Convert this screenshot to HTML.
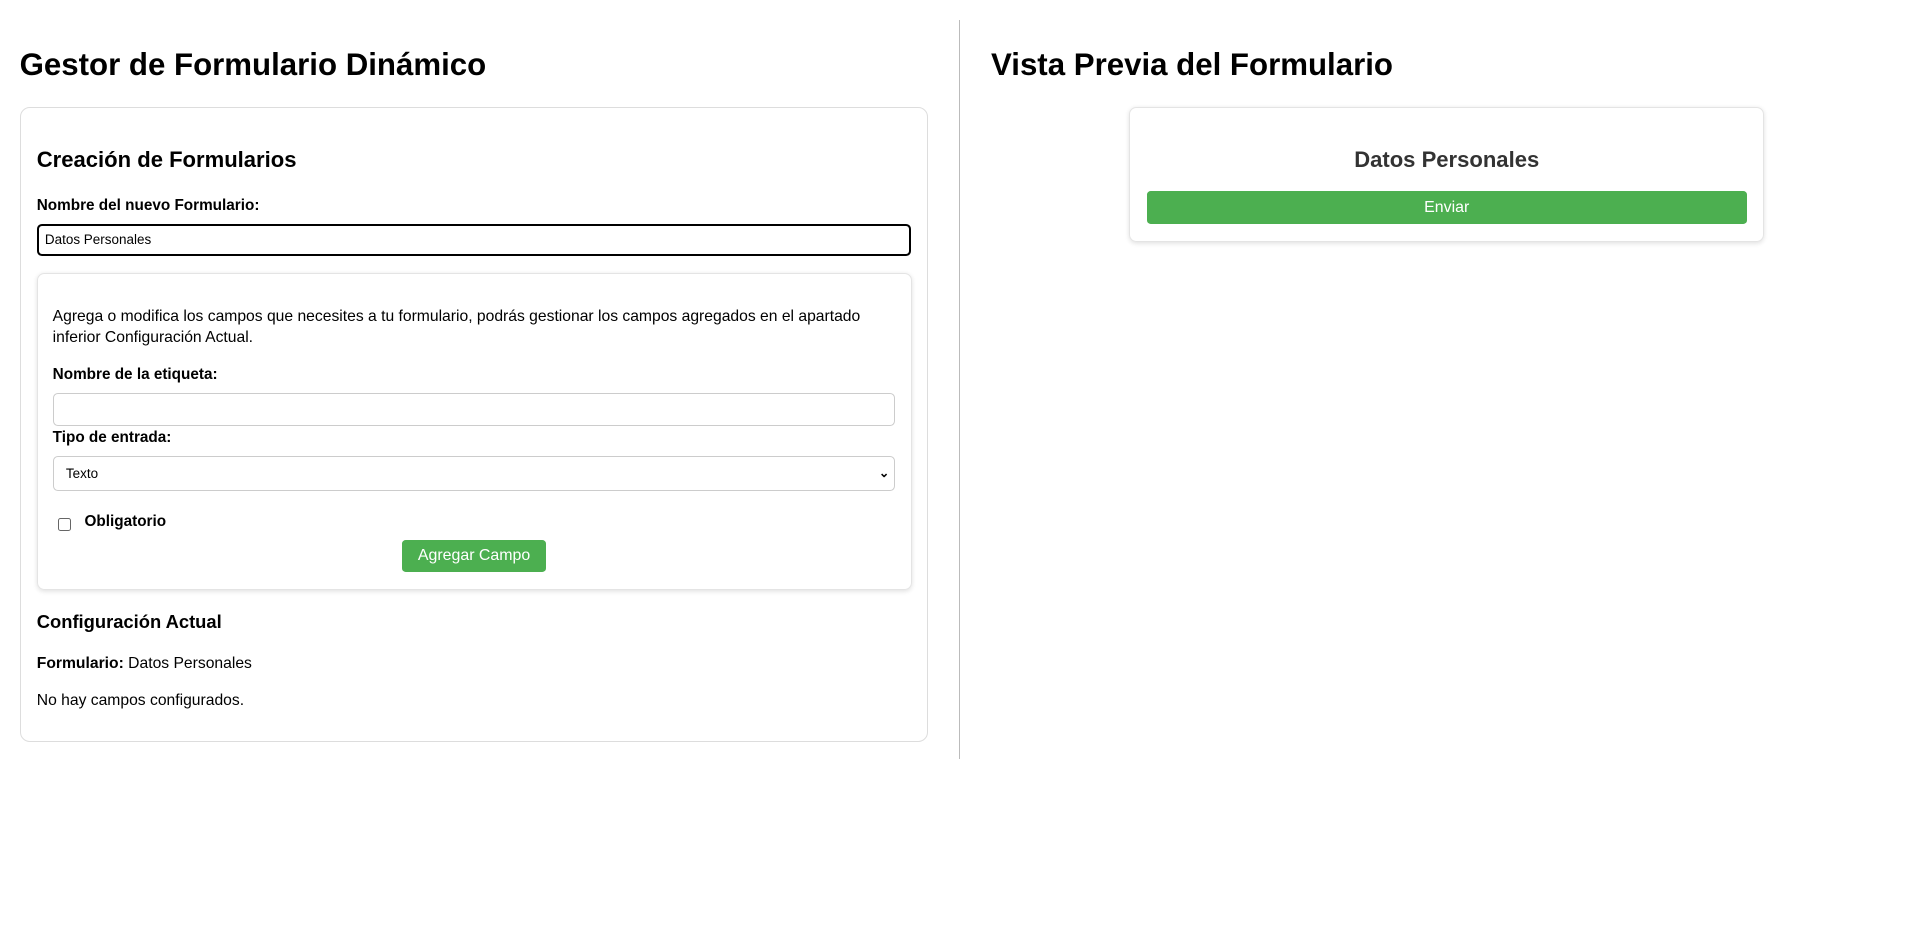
<!DOCTYPE html>
<html><head><meta charset="utf-8"><style>
html,body{margin:0;padding:0;background:#fff;width:1918px;height:952px;overflow:hidden}
#w{zoom:1.225;position:relative;width:1566px;height:778px;font-family:"Liberation Sans",sans-serif;color:#000}
.a{position:absolute}
.h1{font-size:25.5px;font-weight:bold;line-height:32px}
.lbl{font-size:12.5px;font-weight:bold}
.t{font-size:12.8px}
.btn{background:#4CAF50;color:#fff;font-size:13px;text-align:center;border-radius:3px}
</style></head><body><div id="w">
<div class="a h1" style="left:16px;top:37px">Gestor de Formulario Dinámico</div>
<div class="a" style="left:783px;top:16px;width:1px;height:604px;background:#bbb"></div>
<div class="a" style="left:16px;top:87px;width:740px;height:517px;border:1px solid #ddd;border-radius:8px"></div>
<div class="a" style="left:30px;top:120px;font-size:18px;font-weight:bold">Creación de Formularios</div>
<div class="a lbl" style="left:30px;top:161px">Nombre del nuevo Formulario:</div>
<div class="a" style="left:30px;top:183px;height:23px;border:2px solid #000;border-radius:4px;font-size:11px;line-height:23px;padding-left:5px;width:705px">Datos Personales</div>
<div class="a" style="left:30px;top:223px;width:713px;height:257px;border:1px solid #e4e4e4;border-radius:6px;box-shadow:0 1px 4px rgba(0,0,0,.12)"></div>
<div class="a t" style="left:43px;top:251px;line-height:17px;width:690px">Agrega o modifica los campos que necesites a tu formulario, podrás gestionar los campos agregados en el apartado inferior Configuración Actual.</div>
<div class="a lbl" style="left:43px;top:299px">Nombre de la etiqueta:</div>
<div class="a" style="left:43px;top:321px;width:686px;height:25px;border:1px solid #ccc;border-radius:4px"></div>
<div class="a lbl" style="left:43px;top:350px">Tipo de entrada:</div>
<div class="a" style="left:43px;top:372px;width:686px;height:27px;border:1px solid #ccc;border-radius:4px;font-size:11px;line-height:27px"><span style="margin-left:10px">Texto</span><span style="position:absolute;right:4px;top:0;font-size:10px;font-weight:bold">&#8964;</span></div>
<div class="a" style="left:47px;top:423px;width:9px;height:9px;border:1px solid #666;border-radius:2px"></div>
<div class="a lbl" style="left:69px;top:419px">Obligatorio</div>
<div class="a btn" style="left:328px;top:441px;width:118px;height:26px;line-height:26px">Agregar Campo</div>
<div class="a" style="left:30px;top:499px;font-size:15px;font-weight:bold">Configuración Actual</div>
<div class="a t" style="left:30px;top:535px"><b>Formulario:</b> Datos Personales</div>
<div class="a t" style="left:30px;top:565px">No hay campos configurados.</div>
<div class="a h1" style="left:809px;top:37px">Vista Previa del Formulario</div>
<div class="a" style="left:922px;top:87px;width:516px;height:109px;border:1px solid #e4e4e4;border-radius:6px;box-shadow:0 1px 4px rgba(0,0,0,.12)"></div>
<div class="a" style="left:922px;top:120px;width:518px;text-align:center;font-size:18px;font-weight:bold;color:#333">Datos Personales</div>
<div class="a btn" style="left:936px;top:156px;width:490px;height:27px;line-height:27px">Enviar</div>
</div></body></html>
